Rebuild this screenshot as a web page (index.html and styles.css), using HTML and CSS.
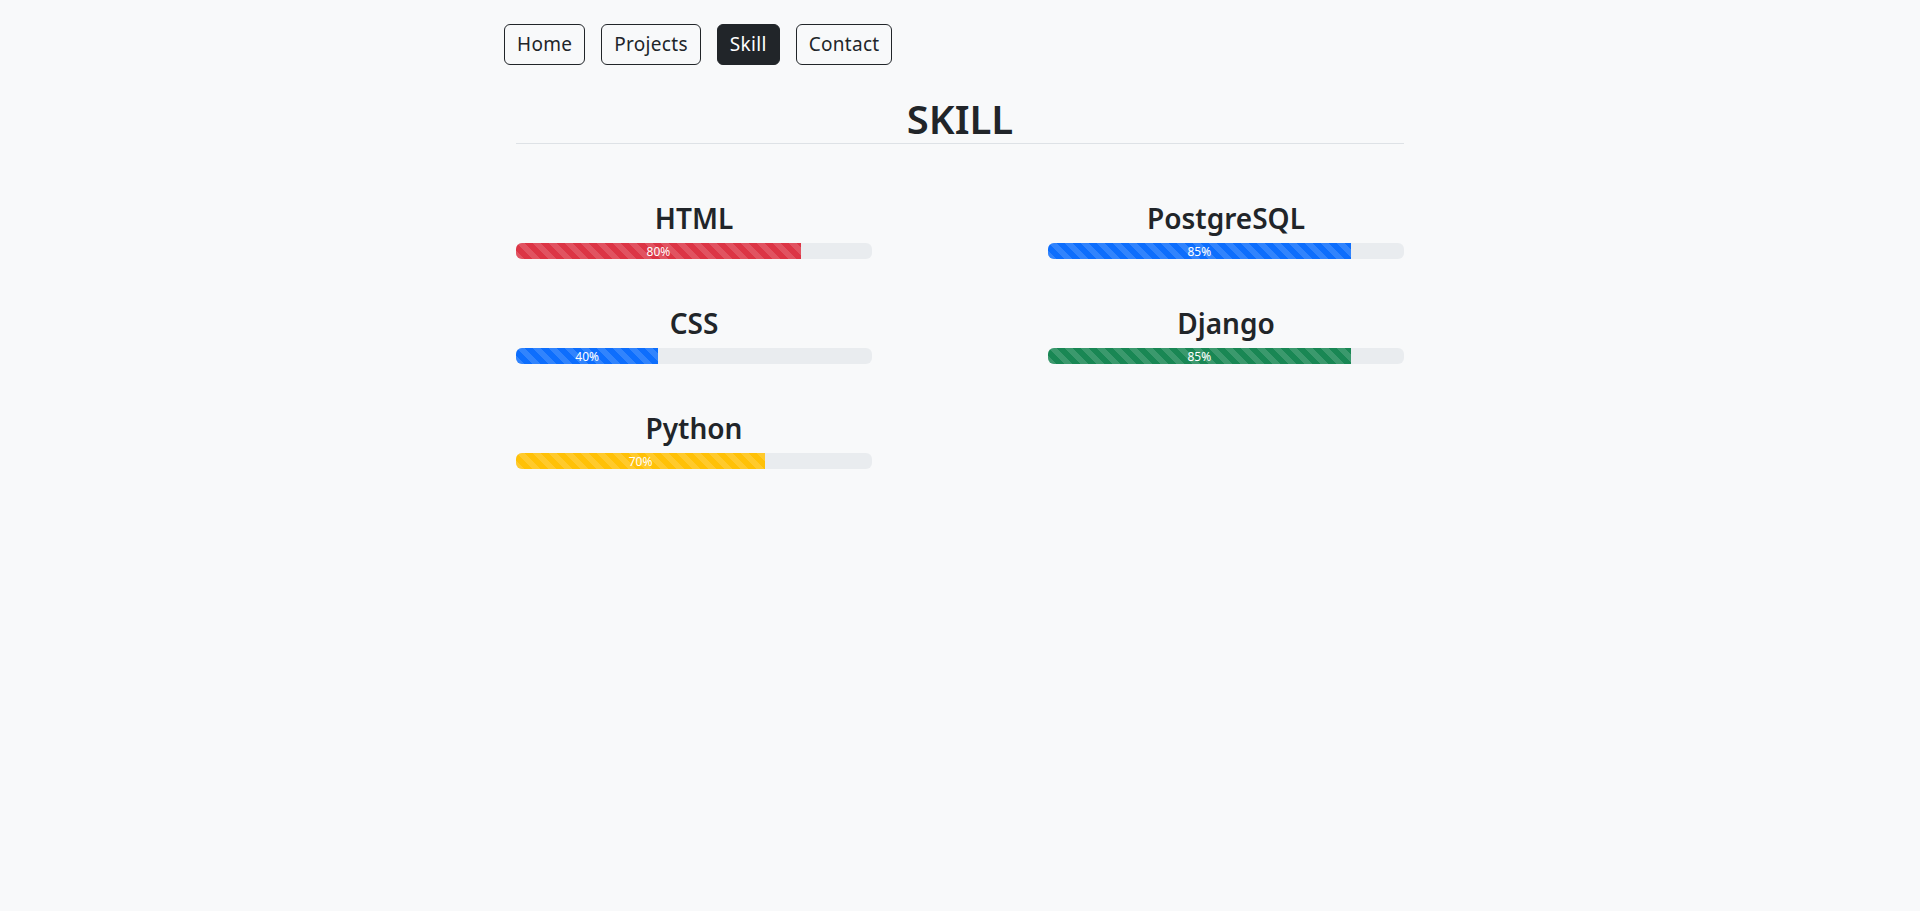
FILE: index.html
```html
<!DOCTYPE html>
<html lang="en">
<head>
<meta charset="utf-8">
<title>Skill</title>
<link rel="stylesheet" href="styles.css">
</head>
<body>
<div class="container">
  <nav class="nav">
    <a class="btn" href="#">Home</a>
    <a class="btn" href="#">Projects</a>
    <a class="btn active" href="#">Skill</a>
    <a class="btn" href="#">Contact</a>
  </nav>
  <main class="content">
    <h1 class="title">SKILL</h1>
    <div class="skills">
      <div class="skill">
        <h3 class="skill-name">HTML</h3>
        <div class="progress"><div class="bar red" style="width: 80%">80%</div></div>
      </div>
      <div class="skill">
        <h3 class="skill-name">PostgreSQL</h3>
        <div class="progress"><div class="bar blue" style="width: 85%">85%</div></div>
      </div>
      <div class="skill">
        <h3 class="skill-name">CSS</h3>
        <div class="progress"><div class="bar blue" style="width: 40%">40%</div></div>
      </div>
      <div class="skill">
        <h3 class="skill-name">Django</h3>
        <div class="progress"><div class="bar green" style="width: 85%">85%</div></div>
      </div>
      <div class="skill">
        <h3 class="skill-name">Python</h3>
        <div class="progress"><div class="bar yellow" style="width: 70%">70%</div></div>
      </div>
    </div>
  </main>
</div>
</body>
</html>
```

FILE: styles.css
```css
* { box-sizing: border-box; }
html, body {
  margin: 0;
  padding: 0;
  background: #f8f9fa;
  color: #212529;
  font-family: "Noto Sans", "Open Sans", sans-serif;
}
.container {
  width: 912px;
  margin: 0 auto;
}
.nav {
  display: flex;
  gap: 16px;
  padding-top: 24px;
}
.btn {
  display: inline-block;
  font-size: 19px;
  line-height: 27px;
  letter-spacing: 0.3px;
  padding: 6px 12px;
  border: 1px solid #212529;
  border-radius: 6px;
  color: #212529;
  text-decoration: none;
  font-weight: 400;
}
.btn.active {
  background: #212529;
  color: #fff;
}
.content {
  padding: 0 12px;
}
.title {
  margin: 30px 0 0;
  font-size: 40px;
  line-height: 48px;
  font-weight: 560;
  text-align: center;
  border-bottom: 1px solid #dee2e6;
}
.skills {
  display: grid;
  grid-template-columns: 356px 356px;
  justify-content: space-between;
  padding-top: 57px;
}
.skill {
  margin-bottom: 47px;
}
.skill-name {
  margin: 0 0 8px;
  font-size: 28px;
  line-height: 34px;
  font-weight: 560;
  text-align: center;
}
.progress {
  display: flex;
  height: 16px;
  background: #e9ecef;
  border-radius: 6px;
  overflow: hidden;
}
.bar {
  display: flex;
  align-items: center;
  justify-content: center;
  color: #fff;
  font-size: 12px;
  white-space: nowrap;
  background-image: linear-gradient(45deg, rgba(255,255,255,.15) 25%, transparent 25%, transparent 50%, rgba(255,255,255,.15) 50%, rgba(255,255,255,.15) 75%, transparent 75%, transparent);
  background-size: 16px 16px;
}
.red { background-color: #dc3545; }
.blue { background-color: #0d6efd; }
.green { background-color: #198754; }
.yellow { background-color: #ffc107; }
```
